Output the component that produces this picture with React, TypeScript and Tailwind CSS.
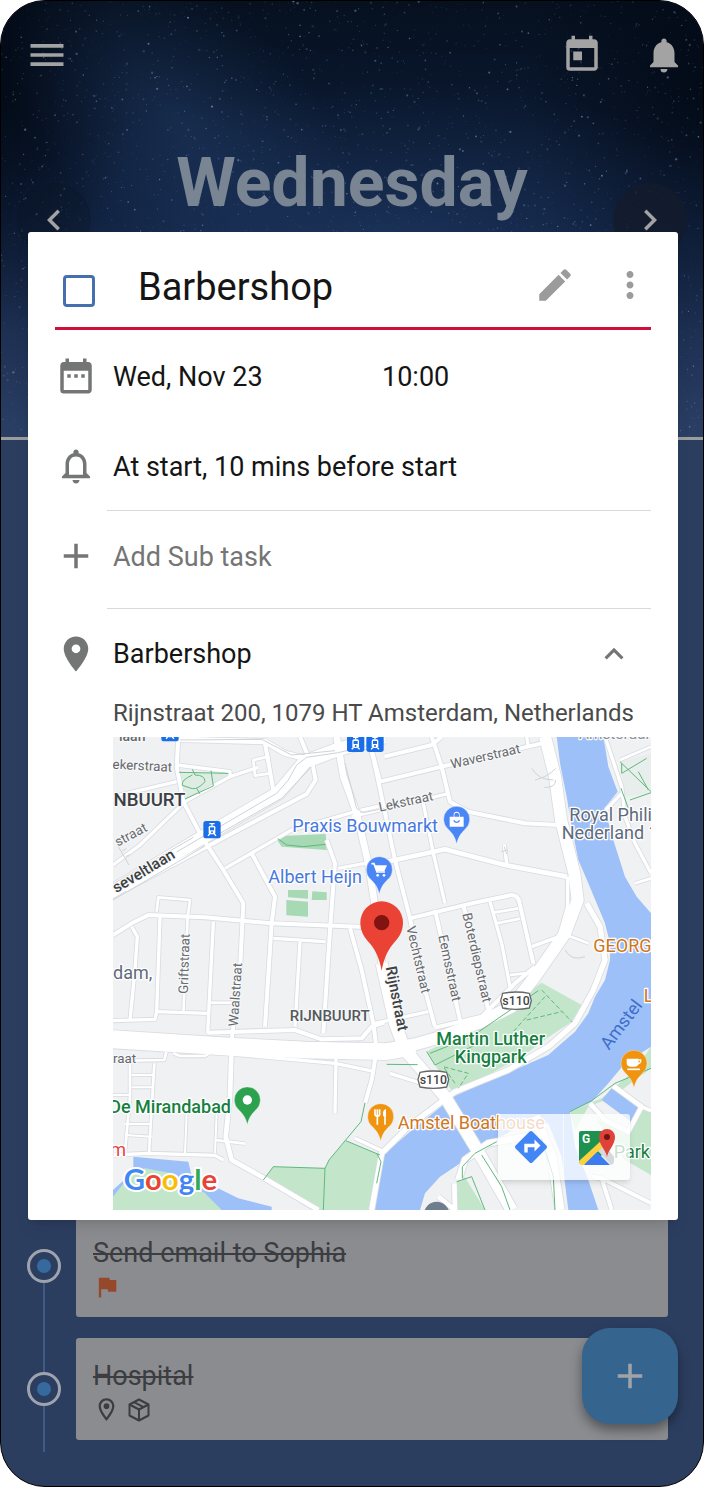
import { useState } from 'react';
import {
  MdAdd,
  MdChevronLeft,
  MdChevronRight,
  MdDateRange,
  MdEdit,
  MdExpandLess,
  MdFlag,
  MdMenu,
  MdMoreVert,
  MdNotifications,
  MdNotificationsNone,
  MdOutlineLocationOn,
  MdPlace,
  MdToday,
} from 'react-icons/md';

// Small seeded generator so the night sky is the same on every render
function makeStars(count: number) {
  let seed = 7;
  const next = () => {
    seed = (seed * 16807) % 2147483647;
    return seed / 2147483647;
  };
  return Array.from({ length: count }, () => ({
    x: next() * 702,
    y: next() * 436,
    r: 0.4 + next() * next() * 0.9,
    o: 0.1 + next() * next() * 0.5,
  }));
}

const stars = makeStars(3600);

const tasks = [
  { id: 1, title: 'Send email to Sophia', flagged: true, icons: false },
  { id: 2, title: 'Hospital', flagged: false, icons: true },
];

// Map streets as [width, path]
const streets: [number, string][] = [
  [10, 'M24 405L105 345L240 215L375 140L375 125L215 105'],
  [10, 'M375 140L460 112'],
  [8, 'M445 90L490 80L495 130L450 137Z'],
  [12, 'M220 20L215 110L235 215L290 320L355 420L415 520L405 720L380 930'],
  [10, 'M24 200L215 155'],
  [16, 'M225 28L480 35L540 70L600 85L690 60'],
  [12, 'M480 40L505 180'],
  [12, 'M585 20L610 80'],
  [12, 'M620 90L632 150L605 192L400 300L60 480'],
  [10, 'M360 415L560 300L750 245L838 225'],
  [12, 'M440 370L510 500L500 580L480 890'],
  [12, 'M24 615L80 580L130 555L300 562L500 580L800 592'],
  [10, 'M80 590L97 620L90 720L75 870'],
  [10, 'M165 560L155 845L150 868L24 872'],
  [8, 'M155 545L160 502L255 510L248 560L235 850'],
  [10, 'M325 575L308 910'],
  [10, 'M505 625L660 635'],
  [10, 'M585 635L570 890'],
  [12, 'M665 330L690 400L675 600L655 910'],
  [12, 'M735 595L770 720L805 880L815 960L800 1050L780 1120'],
  [10, 'M700 415L780 400'],
  [12, 'M838 80L980 45L1010 20'],
  [12, 'M800 60L825 155L1010 110L1310 40'],
  [10, 'M1265 20L1270 50'],
  [12, 'M980 20L1010 110L1035 215L1090 245L1260 280L1360 285'],
  [12, 'M790 20L815 130L870 390L915 565L960 780L990 890'],
  [10, 'M740 260L1025 192'],
  [14, 'M800 405L1020 358L1200 405L1385 440'],
  [10, 'M955 220L985 370L1020 520'],
  [12, 'M915 565L1100 520L1220 495Q1240 495 1244 520L1285 700'],
  [10, 'M1155 515L1190 640L1215 770'],
  [8, 'M1165 548L1240 535'],
  [8, 'M1175 580L1245 566'],
  [10, 'M1205 400L1198 345'],
  [12, 'M990 540L1065 870'],
  [12, 'M1075 525L1150 840'],
  [10, 'M810 880L970 845'],
  [12, 'M990 893L1130 860L1230 760L1290 710'],
  [8, 'M1215 735L1280 728'],
  [10, 'M1388 440L1388 530L1362 620L1280 650'],
  [8, 'M1370 610L1450 640'],
  [10, 'M24 950L380 972L690 1000L810 1025'],
  [10, 'M155 845L308 850'],
  [8, 'M318 818L385 818'],
  [12, 'M308 908L400 905L570 900L650 928L770 925L800 890L838 878'],
  [14, 'M380 940L375 1100L362 1220L380 1290L470 1340L640 1440'],
  [10, 'M355 1290L330 1276L130 1270L24 1275'],
  [8, 'M24 993L178 990L184 965'],
  [8, 'M75 1000L75 1100L60 1265'],
  [8, 'M148 1000L132 1270'],
  [6, 'M245 1150L240 1270'],
  [6, 'M335 1150L330 1270'],
  [6, 'M80 1035L145 1035M80 1072L145 1072M60 1182L140 1182M60 1215L140 1220M24 1095L75 1095'],
  [8, 'M205 970L225 978L300 978L312 970'],
  [10, 'M693 985L690 1150'],
  [8, 'M330 1230L420 1241'],
  [10, 'M750 1225L830 1262'],
  [10, 'M855 1030L980 1070L1020 1120'],
  [10, 'M1500 20L1550 170L1560 260L1590 340L1638 430'],
  [8, 'M1545 90L1638 50'],
  [10, 'M1502 240L1550 190'],
  [8, 'M1590 460L1638 445'],
];

const mainRoads: [number, string][] = [
  [20, 'M695 20L715 140L755 250L790 400L815 560L830 700'],
  [16, 'M1445 520L1485 590L1500 690L1465 780L1410 880L1330 950L1210 1020L1050 1085L910 1190L830 1270L800 1440'],
  [20, 'M1060 1350L1080 1290L1150 1240L1290 1215'],
  [14, 'M1050 1440L1048 1360M1000 1400L1050 1440'],
  [14, 'M1455 1120L1500 1170L1570 1205L1610 1130L1525 1068'],
  [10, 'M1610 1130L1638 1142'],
  [12, 'M1460 1340L1490 1345L1638 1420M1490 1345L1520 1440'],
  [40, 'M10 490L310 312L520 190L600 95L700 58L838 20'],
  [36, 'M1320 20L1350 140L1368 270L1408 430L1418 510L1380 610L1290 740L1220 830L1130 875L1010 920L890 955'],
  [50, 'M10 925L370 948L600 960L840 965L930 950'],
  [36, 'M830 700L870 880L900 960L1020 1100L1120 1265L1220 1440'],
  [28, 'M1290 1160L1340 1280L1365 1440'],
];

function MapPin({ x, y, color, children }: { x: number; y: number; color: string; children?: React.ReactNode }) {
  return (
    <g transform={`translate(${x} ${y})`}>
      <path
        d="M0 74C-5 50-14 42-26 29A39 39 0 1 1 26 29C14 42 5 50 0 74Z"
        fill={color}
        stroke="#fff"
        strokeOpacity="0.5"
        strokeWidth="2"
      />
      {children}
    </g>
  );
}

function TramStop({ x, y }: { x: number; y: number }) {
  return (
    <g transform={`translate(${x} ${y})`}>
      <rect x="-26" y="-26" width="52" height="52" rx="8" fill="#1a6fe8" />
      <path d="M-8-18H8M0-18V-12" stroke="#fff" strokeWidth="4" />
      <rect x="-10" y="-12" width="20" height="26" rx="5" fill="#fff" />
      <rect x="-6" y="-7" width="12" height="9" fill="#1a6fe8" />
      <circle cx="0" cy="8" r="3" fill="#1a6fe8" />
      <path d="M-12 18L-7 13M12 18L7 13" stroke="#fff" strokeWidth="4" />
    </g>
  );
}

function RouteShield({ x, y }: { x: number; y: number }) {
  return (
    <g transform={`translate(${x} ${y})`}>
      <path
        d="M-40-22Q-20-26 0-26T40-22L46 0L40 22Q20 26 0 26T-40 22L-46 0Z"
        fill="#fff"
        stroke="#666"
        strokeWidth="4"
        strokeLinejoin="round"
      />
      <text x="0" y="13" textAnchor="middle" fontSize="37" fontWeight="500" fill="#444">s110</text>
    </g>
  );
}

function LocationMap() {
  return (
    <svg viewBox="24 21 1614 1419" className="block w-full font-[Roboto,sans-serif]" role="img" aria-label="Map of Rijnstraat, Amsterdam">
      <rect x="24" y="21" width="1614" height="1419" fill="#f0f1f3" />

      {/* Water */}
      <g fill="#9dc0f9">
        <path d="M1355 20L1365 100L1385 200L1400 290L1420 390L1450 460L1500 580L1515 640L1515 690L1500 750L1470 800L1450 850L1410 905L1370 940L1330 975L1250 1010L1110 1070L1045 1100L910 1210L840 1270L815 1380L810 1440L945 1440L960 1390L1005 1340L1110 1270L1170 1230L1260 1180L1330 1180L1370 1280L1390 1440L1480 1440L1450 1350L1410 1250L1395 1145L1460 1115L1510 1060L1560 1000L1638 950L1638 550L1595 500L1560 440L1525 330L1498 235L1538 185L1510 110L1495 20Z" />
        <path d="M85 1280L250 1295L258 1330L330 1370L400 1405L500 1430L500 1440L24 1440L24 1380L85 1325Z" />
      </g>

      {/* Parks */}
      <g fill="#c3e6cb">
        <path d="M965 965L1160 860L1310 758L1430 825L1400 875L1330 922L1250 980L1140 1040L1040 1082L1000 1020Z" />
        <path d="M475 1350L505 1310L660 1315L672 1290L722 1232L825 1275L805 1390L795 1440L620 1440Z" />
        <path d="M1055 1440L1055 1355L1080 1342L1140 1440Z" />
        <path d="M1395 1145L1490 1105L1590 1020L1638 950L1638 1015L1550 1080L1500 1110L1450 1130L1410 1200Z" />
        <path d="M1475 1170L1570 1205L1610 1130L1638 1145L1638 1335L1560 1290Z" />
        <path d="M24 1400L80 1330L120 1315L200 1330L300 1390L350 1440L24 1440Z" />
        <path d="M222 125L370 132L350 150L245 208L225 165Z" opacity="0.4" />
        <path d="M1545 95L1638 70L1638 190L1560 200Z" opacity="0.2" />
      </g>
      <g fill="#a6d9b4">
        <path d="M513 325L530 318L662 312L665 360L530 350Z" />
        <path d="M549 480H609V506L549 502ZM622 484L665 487V510H620ZM544 510L609 515V560L544 556Z" />
      </g>
      <path d="M1490 1110L1520 1075L1610 1125L1585 1180Z" fill="#9dc0f9" />

      {/* Roads, casing first */}
      <g fill="none" stroke="#d9dce1" strokeLinejoin="round">
        {streets.map(([w, d], i) => <path key={i} d={d} strokeWidth={w + 5} />)}
        {mainRoads.map(([w, d], i) => <path key={i} d={d} strokeWidth={w + 5} />)}
      </g>
      <g fill="none" stroke="#fff" strokeLinejoin="round">
        {streets.map(([w, d], i) => <path key={i} d={d} strokeWidth={w} />)}
        {mainRoads.map(([w, d], i) => <path key={i} d={d} strokeWidth={w} />)}
      </g>

      {/* Tram tracks */}
      <g fill="none" stroke="#cfd2d6" strokeWidth="3">
        <path d="M215 366L310 310L515 190L550 150L575 105L605 82L700 68L838 34" />
        <path d="M24 462L265 322M24 510L300 348M345 310L530 205L620 110M225 30L470 28L560 75L690 62" />
        <path d="M40 350L72 405M52 362L64 356M62 380L74 374" />
        <path d="M1280 115Q1300 150 1345 150M1290 150Q1330 140 1352 115M1318 172Q1350 175 1352 150M720 100L755 235L775 248L838 235" />
        <path d="M1198 350L1205 372M1190 365L1208 360M1380 660Q1400 695 1440 680" />
      </g>

      {/* Footpaths */}
      <g fill="none" stroke="#5fb97d" strokeWidth="3">
        <path d="M222 127L370 130M240 207L325 168L318 122M262 118L270 135Q300 135 300 155Q280 178 262 176L232 166Q228 150 262 135M275 175L285 192" />
        <path d="M518 326L545 345L595 350L662 343" />
        <path d="M1545 95L1638 185M1600 125L1630 180M1575 210L1638 188M1550 100L1550 130L1625 85M1548 175L1570 235" />
        <path d="M475 1350L505 1310L660 1315L672 1290L768 1175L780 1118M660 1315L655 1440M722 1232L825 1275" />
        <path d="M845 1003L938 1004M975 970L1100 920L1300 782M965 965L990 1005L1120 940" />
        <path d="M1310 780L1400 875M1320 800L1220 910M1265 870L1370 845M1050 1060L1015 1010L1090 1030L1060 1075" strokeDasharray="14 7" />
        <path d="M1072 1345L1072 1310L1110 1270L1175 1235M1130 1275L1190 1370L1215 1440M1055 1355L1100 1340L1140 1440M1310 1225L1345 1340L1350 1440M1395 1145L1460 1112L1530 1060L1638 1015M815 1270L828 1295L815 1360" />
      </g>

      {/* Street names */}
      <g fill="#66696d" stroke="#f7f8f9" strokeWidth="7" strokeLinejoin="round" paintOrder="stroke" fontSize="40">
        <text x="42" y="32" fontSize="42" fontWeight="500">laan</text>
        <text transform="translate(22 116) rotate(3)">ekerstraat</text>
        <text transform="translate(38 350) rotate(-28)">straat</text>
        <text transform="translate(1040 116) rotate(-13)">Waverstraat</text>
        <text transform="translate(824 245) rotate(-12)">Lekstraat</text>
        <text transform="translate(248 792) rotate(-88)">Griftstraat</text>
        <text transform="translate(398 890) rotate(-86)">Waalstraat</text>
        <text transform="translate(904 592) rotate(77)">Vechtstraat</text>
        <text transform="translate(1000 618) rotate(78)">Eemsstraat</text>
        <text transform="translate(1072 552) rotate(77)">Boterdiepstraat</text>
        <text x="24" y="998">raat</text>
        <text x="1422" y="27" fontSize="46" fill="#8a9099">Amsterdam</text>
      </g>
      <g fill="#3c4043" stroke="#f7f8f9" strokeWidth="7" strokeLinejoin="round" paintOrder="stroke" fontWeight="500">
        <text x="241" y="228" fontSize="56" textAnchor="end">NBUURT</text>
        <text transform="translate(34 490) rotate(-31)" fontSize="46">seveltlaan</text>
        <text transform="translate(842 712) rotate(79)" fontSize="46">Rijnstraat</text>
        <text x="674" y="874" fontSize="45" fill="#55585c" textAnchor="middle">RIJNBUURT</text>
      </g>

      {/* Places */}
      <g stroke="#fff" strokeWidth="8" strokeLinejoin="round" paintOrder="stroke" fontSize="54">
        <g fill="#4778e0">
          <text x="562" y="306">Praxis Bouwmarkt</text>
          <text x="490" y="459">Albert Heijn</text>
        </g>
        <g fill="#5d6b7c">
          <text x="1393" y="274">Royal Phili</text>
          <text x="1370" y="328">Nederland 1</text>
          <text x="24" y="746">dam,</text>
        </g>
        <g fill="#d0761c">
          <text x="1465" y="666">GEORG</text>
          <text x="1616" y="817">L</text>
          <text x="878" y="1197">Amstel Boathouse</text>
        </g>
        <g fill="#158040" fontWeight="500">
          <text x="378" y="1148" textAnchor="end">De Mirandabad</text>
          <text x="1157" y="944" textAnchor="middle">Martin Luther</text>
          <text x="1157" y="1000" textAnchor="middle">Kingpark</text>
          <text x="1526" y="1284" fontWeight="400">Park</text>
        </g>
        <text x="16" y="1277" fill="#e0453f">m</text>
      </g>
      <text transform="translate(1512 962) rotate(-53)" fontSize="54" fill="#3f6fc8">Amstel</text>

      <TramStop x={321} y={299} />
      <TramStop x={195} y={8} />
      <TramStop x={752} y={40} />
      <TramStop x={810} y={40} />
      <RouteShield x={1233} y={812} />
      <RouteShield x={985} y={1049} />

      <MapPin x={1055} y={268} color="#4a86f5">
        <path d="M-21-8H21V22H-21ZM-9-8V-14A9 9 0 0 1 9-14V-8" fill="#fff" />
        <path d="M-7-8V-13A7 7 0 0 1 7-13V-8Z" fill="#4a86f5" />
        <path d="M-9 3Q0 15 9 3" fill="none" stroke="#4a86f5" strokeWidth="4" />
      </MapPin>
      <MapPin x={823} y={419} color="#4a86f5">
        <path d="M-24-18H-16L-7 7H17" fill="none" stroke="#fff" strokeWidth="5" />
        <path d="M-14-13H23L15 5H-8Z" fill="#fff" />
        <circle cx="-5" cy="17" r="4" fill="#fff" />
        <circle cx="14" cy="17" r="4" fill="#fff" />
      </MapPin>
      <MapPin x={427} y={1110} color="#2ca14e">
        <circle r="14" fill="#fff" />
      </MapPin>
      <MapPin x={827} y={1160} color="#f0930f">
        <path d="M-17-22V-8Q-17-2-10-2Q-3-2-3-8V-22M-10-22V24M13 24V-20" fill="none" stroke="#fff" strokeWidth="5" />
        <path d="M7-2V-14Q9-22 16-23V2Z" fill="#fff" />
      </MapPin>
      <MapPin x={1587} y={1000} color="#f0930f">
        <path d="M-22-14H14V-2Q14 10 0 10H-8Q-22 10-22-2Z" fill="#fff" />
        <path d="M14-10H20Q22-2 12 2" fill="none" stroke="#fff" strokeWidth="4" />
        <path d="M-20 18H18" stroke="#fff" strokeWidth="5" />
      </MapPin>
      <circle cx="995" cy="1453" r="38" fill="#6f7d8f" />

      {/* Selected place */}
      <path d="M830 722C824 690 814 664 796 642C780 624 766 606 766 578A64 64 0 1 1 894 578C894 606 880 624 864 642C846 664 836 690 830 722Z" fill="#ea4335" />
      <circle cx="830" cy="578" r="23" fill="#811411" />

      <text x="56" y="1380" fontSize="88" fontWeight="700" fontFamily="Lato, sans-serif" stroke="#fff" strokeWidth="12" strokeLinejoin="round" paintOrder="stroke">
        <tspan fill="#4285f4">G</tspan><tspan fill="#ea4335">o</tspan><tspan fill="#fbbc05">o</tspan><tspan fill="#4285f4">g</tspan><tspan fill="#34a853">l</tspan><tspan fill="#ea4335">e</tspan>
      </text>
    </svg>
  );
}

function DirectionsIcon() {
  return (
    <svg viewBox="0 0 34 34" className="size-[34px]">
      <path d="M15.6 1.6a2 2 0 0 1 2.8 0l14 14a2 2 0 0 1 0 2.8l-14 14a2 2 0 0 1-2.8 0l-14-14a2 2 0 0 1 0-2.8z" fill="#4285f4" />
      <path d="M12 22.500V15.500H22" fill="none" stroke="#fff" strokeWidth="3.400" />
      <path d="M20.500 9.500L26.500 15.500L20.500 21.500Z" fill="#fff" />
    </svg>
  );
}

function MapsIcon() {
  return (
    <svg viewBox="0 0 38 38" className="size-[38px]">
      <path d="M3 3H27L30 20L16 36H4Q1 36 1 33V5Q1 3 3 3Z" fill="#1e9150" />
      <path d="M19 22L26 16L36 29V34Q36 36 33 37Z" fill="#d5d8dc" />
      <path d="M1 33L25 11L29 15L6 37H4Q1 37 1 33Z" fill="#fdd140" />
      <path d="M6 37L19 24L32 37Z" fill="#3c7cf0" />
      <text x="4" y="15" fontSize="12" fontWeight="700" fill="#fff" fontFamily="Roboto, sans-serif">G</text>
      <path d="M29 29C28 22 21 17 21 9A8 8 0 0 1 37 9C37 17 30 22 29 29Z" fill="#df4238" />
      <circle cx="29" cy="9" r="3" fill="#6e1411" />
    </svg>
  );
}

function BoxIcon() {
  return (
    <svg viewBox="0 0 22 24" className="ml-1 h-6 w-[22px]" fill="none" stroke="currentColor" strokeWidth="2" strokeLinejoin="round" aria-hidden="true">
      <path d="M11 1.500L20.500 6.500V17.500L11 22.500L1.500 17.500V6.500Z" />
      <path d="M1.500 6.500L11 11.500L20.500 6.500M11 11.500V22.500M6 4.200L15.500 9.200" />
    </svg>
  );
}

export default function App() {
  const [done, setDone] = useState(false);
  const [showMap, setShowMap] = useState(true);

  return (
    <div className="grid min-h-screen overflow-hidden rounded-[45px] border border-black bg-[#2c3e60] font-[Roboto,sans-serif]">
      {/* Day view behind the dialog */}
      <main className="col-start-1 row-start-1 flex flex-col">
        <div className="relative h-[436px] bg-linear-to-b from-[#06101f] via-[#0f203e] to-[#2b3f65]">
          <svg viewBox="0 0 702 436" preserveAspectRatio="xMidYMid slice" className="absolute inset-0 size-full" aria-hidden="true">
            <defs>
              <radialGradient id="haze">
                <stop offset="0" stopColor="#2c4d80" stopOpacity="0.35" />
                <stop offset="0.5" stopColor="#2c4d80" stopOpacity="0.16" />
                <stop offset="1" stopColor="#2c4d80" stopOpacity="0" />
              </radialGradient>
              <radialGradient id="corner">
                <stop offset="0" stopColor="#01060f" stopOpacity="0.7" />
                <stop offset="1" stopColor="#01060f" stopOpacity="0" />
              </radialGradient>
            </defs>
            <ellipse cx="0" cy="90" rx="130" ry="240" fill="url(#corner)" />
            <ellipse cx="702" cy="90" rx="180" ry="240" fill="url(#corner)" />
            <ellipse cx="180" cy="120" rx="200" ry="120" fill="url(#haze)" transform="rotate(40 180 120)" />
            <ellipse cx="380" cy="230" rx="380" ry="150" fill="url(#haze)" />
            {stars.map((s, i) => <circle key={i} cx={s.x} cy={s.y} r={s.r} fill="#a9c3e8" opacity={s.o} />)}
          </svg>

          <div className="relative flex items-center gap-10 pt-8 pr-[18px] pl-6 text-[#a3a3a3]">
            <button type="button" aria-label="Menu" className="mr-auto"><MdMenu size={44} /></button>
            <button type="button" aria-label="Today"><MdToday size={42} /></button>
            <button type="button" aria-label="Notifications"><MdNotifications size={42} /></button>
          </div>

          <div className="relative flex items-start px-4 pt-[66px] text-[#a3a3a3]">
            <button type="button" aria-label="Previous day" className="mt-10 flex size-[74px] items-center justify-center rounded-full bg-[#0b1322]/30">
              <MdChevronLeft size={42} />
            </button>
            <h1 className="flex-1 text-center text-[68px] leading-[80px] font-bold text-[#7a8593]">Wednesday</h1>
            <button type="button" aria-label="Next day" className="mt-10 flex size-[74px] items-center justify-center rounded-full bg-[#141c2c]/80">
              <MdChevronRight size={42} />
            </button>
          </div>
        </div>
        <div className="h-[3px] bg-[#9c9d9b]" />

        <ul className="flex flex-1 flex-col justify-end pr-[35px] pb-[34px] pl-[26px]">
          {tasks.map((task, idx) => (
            <li key={task.id} className="flex">
              <div className="flex w-[34px] flex-col items-center">
                <div className={idx > 0 ? 'h-[34px] w-[2px] bg-[#415a85]' : 'h-[34px] w-[2px]'} />
                <div className="flex size-[34px] items-center justify-center rounded-full border-3 border-[#9fa3ad]">
                  <div className="size-[14px] rounded-full bg-[#366a9f]" />
                </div>
                <div className="w-[2px] flex-1 bg-[#415a85]" />
              </div>
              <div className={idx === tasks.length - 1 ? 'ml-[15px] flex-1 pb-3' : 'ml-[15px] flex-1 pb-[21px]'}>
                <div className="h-[102px] rounded-[3px] bg-[#8b8c90] px-[17px] pt-[22px] text-[#3b3d41]">
                  <p className="text-[27px] leading-8 line-through decoration-2">{task.title}</p>
                  <div className="mt-1 flex items-center gap-1">
                    {task.flagged && <MdFlag size={28} className="text-[#96482a]" />}
                    {task.icons && (
                      <>
                        <MdOutlineLocationOn size={27} />
                        <BoxIcon />
                      </>
                    )}
                  </div>
                </div>
              </div>
            </li>
          ))}
        </ul>
      </main>

      {/* Add task button */}
      <button
        type="button"
        aria-label="Add task"
        className="z-10 col-start-1 row-start-1 mr-[25px] mb-[62px] flex size-24 items-center justify-center self-end justify-self-end rounded-[28px] bg-[#35648f] text-[#a0a4aa] shadow-[0_6px_12px_rgba(0,0,0,0.4)]"
      >
        <MdAdd size={42} />
      </button>

      {/* Task dialog */}
      <section role="dialog" aria-label="Barbershop" className="z-20 col-start-1 row-start-1 mt-[231px] mr-[25px] ml-[27px] self-start rounded-[3px] bg-white px-[27px] pb-[10px] text-[#151515] shadow-lg">
        <div className="flex h-[98px] items-center border-b-3 border-[#d0103a] pt-[14px] pl-2">
          <input
            id="done"
            type="checkbox"
            checked={done}
            onChange={(e) => setDone(e.target.checked)}
            className="mt-2 size-8 appearance-none rounded-[4px] border-3 border-[#4470b0] checked:bg-[#4470b0]"
          />
          <label htmlFor="done" className="ml-[43px] flex-1 text-[38px] leading-[44px]">Barbershop</label>
          <button type="button" aria-label="Edit" className="mb-1 text-[#9b9b9b]"><MdEdit size={42} /></button>
          <button type="button" aria-label="More options" className="mb-1 ml-[33px] text-[#9b9b9b]"><MdMoreVert size={42} /></button>
        </div>

        <div className="flex h-[91px] items-center text-[27px]">
          <MdDateRange size={42} className="text-[#747676]" />
          <span className="ml-4 w-[269px] pt-[3px]">Wed, Nov 23</span>
          <span className="pt-[3px]">10:00</span>
        </div>

        <div className="flex h-[90px] items-center text-[27px]">
          <MdNotificationsNone size={42} className="text-[#747676]" />
          <div className="ml-[10px] flex h-full flex-1 items-center border-b border-[#d9d9d9] pt-[3px] pl-[6px]">
            At start, 10 mins before start
          </div>
        </div>

        <button type="button" className="flex h-[98px] w-full items-center text-left text-[27px] text-[#757575]">
          <MdAdd size={42} className="mb-2" />
          <span className="ml-[10px] flex h-full flex-1 items-center border-b border-[#d9d9d9] pb-1 pl-[6px]">Add Sub task</span>
        </button>

        <div className="flex h-[90px] items-center text-[27px]">
          <MdPlace size={42} className="text-[#747676]" />
          <span className="ml-4 flex-1">Barbershop</span>
          <button
            type="button"
            aria-label="Toggle map"
            aria-expanded={showMap}
            onClick={() => setShowMap(!showMap)}
            className="mr-[18px] text-[#747676]"
          >
            <MdExpandLess size={38} />
          </button>
        </div>

        <div className="ml-[58px]">
          <p className="mb-[10px] text-[24px] leading-7 whitespace-nowrap text-[#4a4a4a]">Rijnstraat 200, 1079 HT Amsterdam, Netherlands</p>
          {showMap && (
            <div className="relative">
              <LocationMap />
              <div className="absolute right-[21px] bottom-[30px] flex divide-x divide-white/60 rounded-[3px] bg-white/75 shadow-md">
                <button type="button" aria-label="Directions" className="flex size-[66px] items-center justify-center">
                  <DirectionsIcon />
                </button>
                <button type="button" aria-label="Open in Google Maps" className="flex size-[66px] items-center justify-center">
                  <MapsIcon />
                </button>
              </div>
            </div>
          )}
        </div>
      </section>
    </div>
  );
}
